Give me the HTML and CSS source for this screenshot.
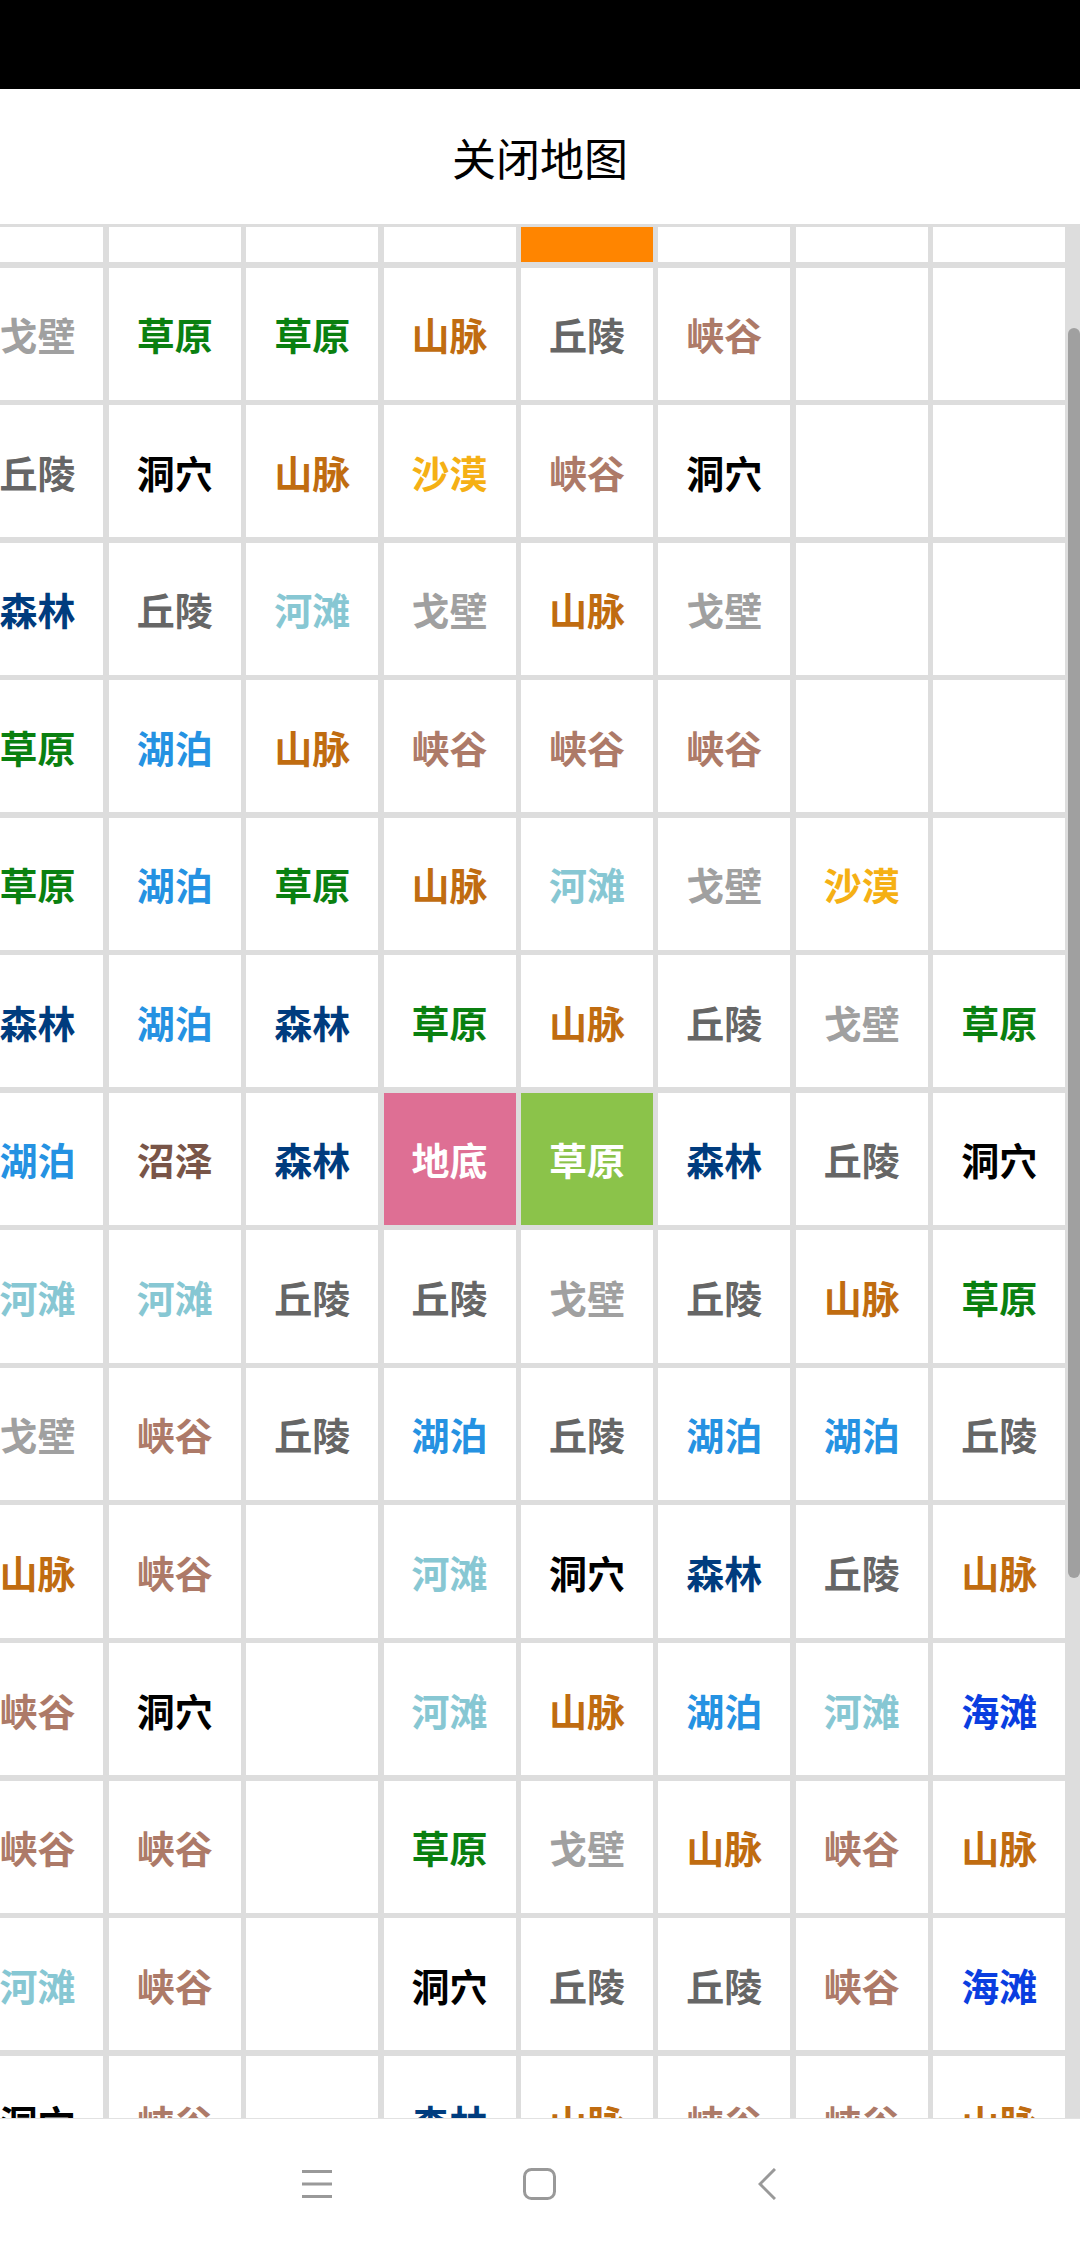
FILE: index.html
```html
<!DOCTYPE html>
<html lang="zh-CN">
<head>
    <meta charset="UTF-8">
    <meta name="viewport" content="width=device-width, initial-scale=1.0">
    <title>关闭地图</title>
    <link rel="stylesheet" href="styles.css">
</head>
<body>
    <div class="status_bar"></div>
    <div class="map_title">关闭地图</div>
    <div class="map_area">
        <div class="map_clip">
            <div class="map_grid">
                <!-- top row, scrolled mostly out of view -->
                <div class="cell"></div><div class="cell"></div><div class="cell"></div><div class="cell"></div><div class="cell orange"></div><div class="cell"></div><div class="cell"></div><div class="cell"></div>

                <div class="cell gobi">戈壁</div><div class="cell grass">草原</div><div class="cell grass">草原</div><div class="cell mountain">山脉</div><div class="cell hill">丘陵</div><div class="cell canyon">峡谷</div><div class="cell"></div><div class="cell"></div>
                <div class="cell hill">丘陵</div><div class="cell cave">洞穴</div><div class="cell mountain">山脉</div><div class="cell desert">沙漠</div><div class="cell canyon">峡谷</div><div class="cell cave">洞穴</div><div class="cell"></div><div class="cell"></div>
                <div class="cell forest">森林</div><div class="cell hill">丘陵</div><div class="cell shoal">河滩</div><div class="cell gobi">戈壁</div><div class="cell mountain">山脉</div><div class="cell gobi">戈壁</div><div class="cell"></div><div class="cell"></div>
                <div class="cell grass">草原</div><div class="cell lake">湖泊</div><div class="cell mountain">山脉</div><div class="cell canyon">峡谷</div><div class="cell canyon">峡谷</div><div class="cell canyon">峡谷</div><div class="cell"></div><div class="cell"></div>
                <div class="cell grass">草原</div><div class="cell lake">湖泊</div><div class="cell grass">草原</div><div class="cell mountain">山脉</div><div class="cell shoal">河滩</div><div class="cell gobi">戈壁</div><div class="cell desert">沙漠</div><div class="cell"></div>
                <div class="cell forest">森林</div><div class="cell lake">湖泊</div><div class="cell forest">森林</div><div class="cell grass">草原</div><div class="cell mountain">山脉</div><div class="cell hill">丘陵</div><div class="cell gobi">戈壁</div><div class="cell grass">草原</div>
                <div class="cell lake">湖泊</div><div class="cell swamp">沼泽</div><div class="cell forest">森林</div><div class="cell under_on">地底</div><div class="cell grass_on">草原</div><div class="cell forest">森林</div><div class="cell hill">丘陵</div><div class="cell cave">洞穴</div>
                <div class="cell shoal">河滩</div><div class="cell shoal">河滩</div><div class="cell hill">丘陵</div><div class="cell hill">丘陵</div><div class="cell gobi">戈壁</div><div class="cell hill">丘陵</div><div class="cell mountain">山脉</div><div class="cell grass">草原</div>
                <div class="cell gobi">戈壁</div><div class="cell canyon">峡谷</div><div class="cell hill">丘陵</div><div class="cell lake">湖泊</div><div class="cell hill">丘陵</div><div class="cell lake">湖泊</div><div class="cell lake">湖泊</div><div class="cell hill">丘陵</div>
                <div class="cell mountain">山脉</div><div class="cell canyon">峡谷</div><div class="cell"></div><div class="cell shoal">河滩</div><div class="cell cave">洞穴</div><div class="cell forest">森林</div><div class="cell hill">丘陵</div><div class="cell mountain">山脉</div>
                <div class="cell canyon">峡谷</div><div class="cell cave">洞穴</div><div class="cell"></div><div class="cell shoal">河滩</div><div class="cell mountain">山脉</div><div class="cell lake">湖泊</div><div class="cell shoal">河滩</div><div class="cell beach">海滩</div>
                <div class="cell canyon">峡谷</div><div class="cell canyon">峡谷</div><div class="cell"></div><div class="cell grass">草原</div><div class="cell gobi">戈壁</div><div class="cell mountain">山脉</div><div class="cell canyon">峡谷</div><div class="cell mountain">山脉</div>
                <div class="cell shoal">河滩</div><div class="cell canyon">峡谷</div><div class="cell"></div><div class="cell cave">洞穴</div><div class="cell hill">丘陵</div><div class="cell hill">丘陵</div><div class="cell canyon">峡谷</div><div class="cell beach">海滩</div>
                <div class="cell cave">洞穴</div><div class="cell canyon">峡谷</div><div class="cell"></div><div class="cell forest">森林</div><div class="cell mountain">山脉</div><div class="cell canyon">峡谷</div><div class="cell canyon">峡谷</div><div class="cell mountain">山脉</div>
            </div>
        </div>
        <div class="scroll_track"><div class="scroll_thumb"></div></div>
    </div>
    <div class="nav_bar">
        <svg class="nav_menu" width="30" height="28" viewBox="0 0 30 28">
            <path d="M0 1.5H30M0 14H30M0 26.5H30" fill="none" stroke="#999" stroke-width="3"/>
        </svg>
        <svg class="nav_home" width="33" height="32" viewBox="0 0 33 32">
            <rect x="1.5" y="1.5" width="30" height="29" rx="7" fill="none" stroke="#999" stroke-width="3"/>
        </svg>
        <svg class="nav_back" width="18" height="32" viewBox="0 0 18 32">
            <path d="M17 1L2 16L17 31" fill="none" stroke="#999" stroke-width="3"/>
        </svg>
    </div>
</body>
</html>
```

FILE: styles.css
```css
html, body {
    margin: 0;
    height: 100%;
}
body {
    display: flex;
    flex-direction: column;
    height: 2248px;
    overflow: hidden;
    background-color: #fff;
    font-family: "Noto Sans CJK SC", "Noto Sans", sans-serif;
}
.status_bar {
    height: 89px;
    background-color: #000;
}
.map_title {
    height: 135px;
    display: flex;
    align-items: center;
    justify-content: center;
    font-size: 44px;
    color: #000;
}
.map_area {
    flex: 1;
    min-height: 0;
    display: flex;
    border-top: 3px solid #ddd;
}
.map_clip {
    width: 1065px;
    overflow: hidden;
}
.map_grid {
    display: grid;
    grid-template-columns: repeat(8, 132px);
    grid-auto-rows: 132.1px;
    gap: 5.45px 5.4px;
    width: max-content;
    margin: -96.85px 0 0 -28.6px;
    background-color: #ddd;
}
.cell {
    display: flex;
    align-items: center;
    justify-content: center;
    background-color: #fff;
    font-size: 38px;
    font-weight: bold;
}
.scroll_track {
    width: 15px;
    background-color: #ddd;
}
.scroll_thumb {
    width: 12px;
    height: 1250px;
    margin: 101px 0 0 3px;
    border-radius: 6px;
    background-color: #a0a0a0;
}
.nav_bar {
    height: 129px;
    display: flex;
    align-items: center;
    padding-left: 302px;
    border-top: 1px solid #e2e2e2;
    background-color: #fff;
}
.nav_menu {
    margin-right: 191px;
}
.nav_home {
    margin-right: 202px;
}

/* terrain colours */
.gobi { color: #a0a0a0; }
.grass { color: #0a8010; }
.mountain { color: #c06c10; }
.hill { color: #666; }
.canyon { color: #ad7a68; }
.cave { color: #000; }
.desert { color: #f5b014; }
.forest { color: #003c7e; }
.shoal { color: #87c7d3; }
.lake { color: #2592e2; }
.swamp { color: #795548; }
.beach { color: #0a3ee0; }
.orange { background-color: #ff8500; }
.under_on { background-color: #de6f94; color: #fff; }
.grass_on { background-color: #8bc34a; color: #fff; }
```
